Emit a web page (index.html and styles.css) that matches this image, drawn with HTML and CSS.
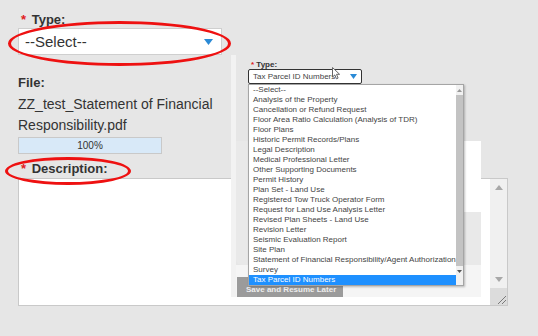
FILE: index.html
```html
<!DOCTYPE html>
<html>
    <head>
        <title>Upload Document</title>
        <link rel="stylesheet" href="styles.css">
    </head>
    <body>
        <div class="page">
            <div class="label"><span class="req">*</span> Type:</div>
            <div class="select">
                <span>--Select--</span>
                <svg class="caret" width="9" height="6" viewBox="0 0 9 6"><path d="M0 0 L9 0 L4.5 6 Z" fill="#2a8ad6"/></svg>
            </div>

            <div class="label file-label">File:</div>
            <div class="file-name">ZZ_test_Statement of Financial Responsibility.pdf</div>
            <div class="progress">100%</div>

            <div class="label desc-label"><span class="req">*</span> Description:</div>
            <div class="textarea">
                <div class="scroll">
                    <div class="scroll-btn">
                        <svg width="8" height="5" viewBox="0 0 8 5"><path d="M0 5 L8 5 L4 0 Z" fill="#a8a8a8"/></svg>
                    </div>
                    <div class="scroll-track"></div>
                    <div class="scroll-btn">
                        <svg width="8" height="5" viewBox="0 0 8 5"><path d="M0 0 L8 0 L4 5 Z" fill="#a8a8a8"/></svg>
                    </div>
                    <div class="grip">
                        <svg width="11" height="11" viewBox="0 0 11 11"><path d="M10 2 L2 10 M10 6 L6 10" stroke="#7a7a7a" stroke-width="1"/></svg>
                    </div>
                </div>
            </div>

            <!-- pasted screenshot of the open list -->
            <div class="inset">
                <div class="mini-top">
                    <div class="mini-label"><span class="req">*</span> Type:</div>
                    <div class="mini-select">
                        <span>Tax Parcel ID Numbers</span>
                        <svg width="7" height="5" viewBox="0 0 7 5"><path d="M0 0 L7 0 L3.5 5 Z" fill="#2a8ad6"/></svg>
                    </div>
                    <svg class="cursor" width="10" height="13" viewBox="0 0 10 13"><path d="M0.5 0.5 L0.5 10 L2.8 7.9 L4.4 11.8 L6.1 11.1 L4.5 7.3 L7.6 7.3 Z" fill="#fff" stroke="#666" stroke-width="1"/></svg>

                    <div class="mini-list">
                        <div class="opts">
                            <div class="opt">--Select--</div>
                            <div class="opt">Analysis of the Property</div>
                            <div class="opt">Cancellation or Refund Request</div>
                            <div class="opt">Floor Area Ratio Calculation (Analysis of TDR)</div>
                            <div class="opt">Floor Plans</div>
                            <div class="opt">Historic Permit Records/Plans</div>
                            <div class="opt">Legal Description</div>
                            <div class="opt">Medical Professional Letter</div>
                            <div class="opt">Other Supporting Documents</div>
                            <div class="opt">Permit History</div>
                            <div class="opt">Plan Set - Land Use</div>
                            <div class="opt">Registered Tow Truck Operator Form</div>
                            <div class="opt">Request for Land Use Analysis Letter</div>
                            <div class="opt">Revised Plan Sheets - Land Use</div>
                            <div class="opt">Revision Letter</div>
                            <div class="opt">Seismic Evaluation Report</div>
                            <div class="opt">Site Plan</div>
                            <div class="opt">Statement of Financial Responsibility/Agent Authorization</div>
                            <div class="opt">Survey</div>
                            <div class="opt selected">Tax Parcel ID Numbers</div>
                        </div>
                        <div class="mini-scroll">
                            <div class="mini-arrow">
                                <svg width="5" height="3" viewBox="0 0 5 3"><path d="M0 3 L5 3 L2.5 0 Z" fill="#999"/></svg>
                            </div>
                            <div class="mini-thumb"></div>
                            <div class="mini-arrow">
                                <svg width="5" height="3" viewBox="0 0 5 3"><path d="M0 0 L5 0 L2.5 3 Z" fill="#555"/></svg>
                            </div>
                        </div>
                    </div>
                </div>
                <div class="mini-panel">
                    <div class="mini-white"></div>
                </div>
                <div class="mini-foot">
                    <div class="mini-btn">Save and Resume Later</div>
                </div>
            </div>

            <div class="mark mark-type"></div>
            <div class="mark mark-desc"></div>
        </div>
    </body>
</html>
```

FILE: styles.css
```css
body {
    margin: 0;
    background-color: #e6e6e6;
    color: #333;
    font-family: "Liberation Sans", Arial, sans-serif;
}

.page {
    position: relative;
    height: 336px;
    padding: 12px 0 0 18px;
    box-sizing: border-box;
    overflow: hidden;
}

.label {
    padding-left: 3px;
    font-size: 13px;
    font-weight: bold;
    line-height: 16px;
}
.req {
    color: #e0201c;
    margin-right: 2px;
}

.select {
    display: flex;
    align-items: center;
    justify-content: space-between;
    width: 204px;
    height: 27px;
    box-sizing: border-box;
    padding: 0 8px 0 6px;
    background-color: white;
    border: 1px solid #cfcfcf;
    font-size: 15px;
}
.caret {
    margin-top: 1px;
}

.file-label {
    margin-top: 20px;
    padding-left: 0;
}
.file-name {
    margin-top: 3px;
    width: 205px;
    font-size: 14px;
    line-height: 21px;
}

.progress {
    margin-top: 1px;
    width: 144px;
    height: 17px;
    box-sizing: border-box;
    border: 1px solid #c9c9c9;
    background-color: #d8e9f8;
    font-size: 10px;
    line-height: 15px;
    text-align: center;
}

.desc-label {
    margin-top: 7px;
}

.textarea {
    margin-top: 1px;
    width: 490px;
    height: 128px;
    box-sizing: border-box;
    border: 1px solid #c9c9c9;
    background-color: white;
    display: flex;
    justify-content: flex-end;
}
.scroll {
    width: 17px;
    display: flex;
    flex-direction: column;
    background-color: #f0f0f0;
}
.scroll-btn {
    height: 17px;
    display: flex;
    align-items: center;
    justify-content: center;
}
.scroll-track {
    flex: 1;
}
.grip {
    height: 17px;
    background-color: #dcdcdc;
    display: flex;
    align-items: flex-end;
    justify-content: flex-end;
}

/* the pasted screenshot */
.inset {
    position: absolute;
    left: 231px;
    top: 55px;
    width: 250px;
    height: 242px;
    box-sizing: border-box;
    border-left: 5px solid #f2f2f2;
    background-color: #e6e6e6;
}
.mini-top {
    position: relative;
    height: 86px;
    box-sizing: border-box;
    padding: 5px 0 0 12px;
}
.mini-label {
    padding-left: 3px;
    font-size: 8px;
    font-weight: bold;
    line-height: 9px;
}
.mini-label .req {
    margin-right: 0;
}
.mini-select {
    display: flex;
    align-items: center;
    justify-content: space-between;
    width: 114px;
    height: 15px;
    box-sizing: border-box;
    padding: 0 4px 0 4px;
    background-color: white;
    border: 1px solid #333;
    border-radius: 2px;
    font-size: 8px;
    color: #444;
}
.cursor {
    position: absolute;
    left: 96px;
    top: 12px;
    z-index: 3;
}

.mini-list {
    position: absolute;
    left: 12px;
    top: 29px;
    z-index: 2;
    width: 214px;
    display: flex;
    background-color: white;
    border: 1px solid #a5a5a5;
    box-shadow: 1px 1px 2px rgba(0, 0, 0, 0.25);
}
.opts {
    flex: 1;
}
.opt {
    height: 10px;
    padding-left: 4px;
    font-size: 8px;
    line-height: 10px;
    color: #444;
    white-space: nowrap;
}
.opt.selected {
    background-color: #1e90ff;
    color: white;
}
.mini-scroll {
    width: 8px;
    display: flex;
    flex-direction: column;
    background-color: #f1f1f1;
}
.mini-arrow {
    height: 10px;
    display: flex;
    align-items: center;
    justify-content: center;
}
.mini-thumb {
    height: 171px;
    background-color: #c3c3c3;
}

.mini-panel {
    height: 124px;
    background-color: #e9e9e9;
    border-bottom-left-radius: 6px;
}
.mini-white {
    margin-left: 12px;
    height: 71px;
    background-color: white;
}
.mini-foot {
    height: 32px;
    box-sizing: border-box;
    padding: 12px 0 0 1px;
    background-color: #f5f5f5;
}
.mini-btn {
    width: 106px;
    height: 20px;
    box-sizing: border-box;
    padding: 8px 0 0 9px;
    background-color: #9b9b9b;
    color: #eee;
    font-size: 8px;
    font-weight: bold;
    line-height: 10px;
}

/* red marker circles */
.mark {
    position: absolute;
    box-sizing: border-box;
    border: 3px solid #ee1111;
    border-radius: 50%;
}
.mark-type {
    left: 8px;
    top: 21px;
    width: 223px;
    height: 45px;
}
.mark-desc {
    left: 5px;
    top: 157px;
    width: 126px;
    height: 28px;
}
```
